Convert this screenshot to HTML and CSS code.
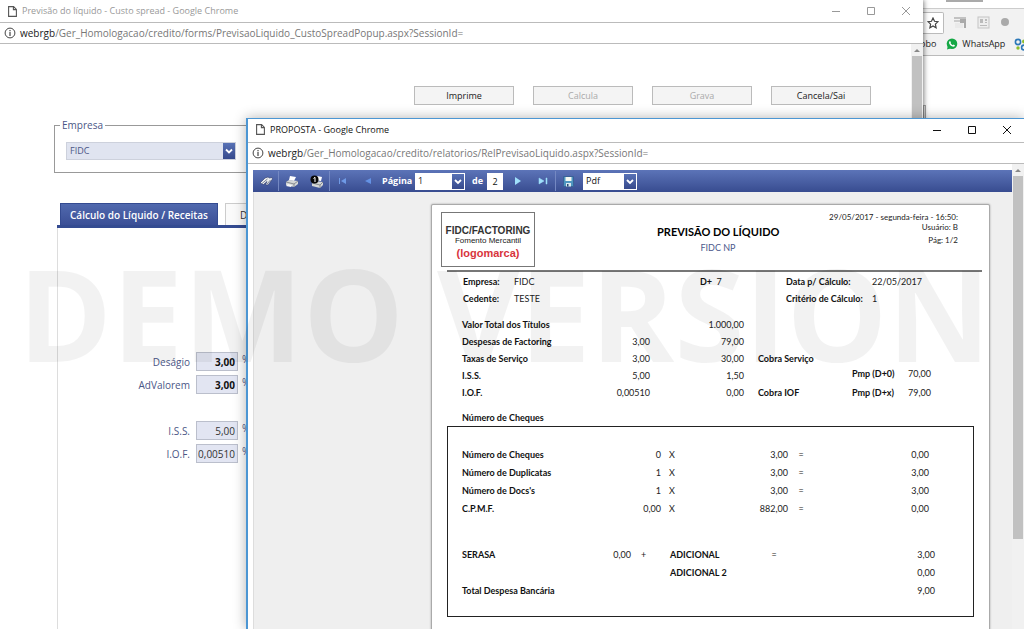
FILE: index.html
```html
<!DOCTYPE html>
<html lang="pt-BR">
<head>
<meta charset="utf-8">
<title>PROPOSTA</title>
<link rel="stylesheet" href="styles.css">
</head>
<body>
<div class="desktop">

  <div class="browser">
    <div class="browser-tabs"><span class="browser-handle"></span></div>
    <div class="browser-bar">
      <span class="omnibox-end"><svg width="12" height="12" viewBox="0 0 12 12"><path d="M6 1l1.500 3.300 3.500.4-2.600 2.400.7 3.600L6 8.900l-3.100 1.800.7-3.600L1 4.700l3.500-.4z" fill="none" stroke="#444" stroke-width="1.200"/></svg></span>
      <svg width="13" height="13" viewBox="0 0 13 13"><path d="M0 1h12v2H0z" fill="#c2c2c2"/><path d="M0 4h6v2H0z" fill="#ccc"/><path d="M6 3h6v9h-2V7H6z" fill="#aaa"/><path d="M1 7h8v5H1z" fill="#eaeaea"/></svg>
      <svg width="13" height="13" viewBox="0 0 13 13"><rect x="1" y="1" width="11" height="11" fill="#eee" stroke="#c4c4c4"/><path d="M3 3h3v4H3zM8 3h2v2H8zM3 9h7v1H3zM8 6h2v1H8z" fill="#bbb"/></svg>
      <svg width="10" height="10" viewBox="0 0 10 10"><circle cx="5" cy="5" r="4" fill="#aaa"/></svg>
    </div>
    <div class="browser-marks">
      <span>obo</span>
      <svg class="wa" width="12" height="12" viewBox="0 0 12 12"><circle cx="6" cy="5.800" r="5.300" fill="#15a845"/><path d="M1 11.500l.8-3.500 2.500 2.500z" fill="#15a845"/><path d="M4 3l1 1.300-.5.8c.5 1 1.200 1.700 2.200 2.100l.8-.7L9 7.500c-.4 1.300-1.900 1.500-3.100.8C4.400 7.600 3.300 6.100 3.100 5 3 4 3.300 3.300 4 3z" fill="#fff"/></svg>
      <span class="wa-text">WhatsApp</span>
      <svg class="apps" width="13" height="13" viewBox="0 0 13 13" fill="none" stroke-width="1.600"><circle cx="4" cy="4" r="2.600" stroke="#2c78b8"/><circle cx="10" cy="3.500" r="2" fill="#8cbd2c"/><circle cx="4" cy="10" r="1.700" fill="#8cbd2c"/><circle cx="10" cy="9.500" r="2.400" stroke="#2c78b8"/></svg>
    </div>
    <div class="browser-page"><div class="browser-edge"></div></div>
  </div>

  <section class="win win-back">
    <header class="titlebar">
      <svg width="9" height="11" viewBox="0 0 9 11"><path d="M.6.6h5l2.800 2.800v7H.6zM5.400.6v3h3" fill="none" stroke="currentColor" stroke-width="1.100"/></svg>
      <h1>Previsão do líquido - Custo spread - Google Chrome</h1>
      <div class="controls">
        <button aria-label="Minimizar"><svg width="10" height="10" viewBox="0 0 10 10"><path d="M1 5.500h8" stroke="currentColor"/></svg></button>
        <button aria-label="Maximizar"><svg width="10" height="10" viewBox="0 0 10 10"><path d="M1.500 1.500h7v7h-7z" fill="none" stroke="currentColor"/></svg></button>
        <button aria-label="Fechar"><svg width="10" height="10" viewBox="0 0 10 10"><path d="M1 1l8 8M9 1L1 9" stroke="currentColor"/></svg></button>
      </div>
    </header>
    <div class="address">
      <svg width="12" height="12" viewBox="0 0 12 12"><circle cx="6" cy="6" r="4.900" fill="none" stroke="#444"/><path d="M6 5v4M6 3v1.200" stroke="#444" stroke-width="1.200"/></svg>
      <p><b>webrgb</b>/Ger_Homologacao/credito/forms/PrevisaoLiquido_CustoSpreadPopup.aspx?SessionId=</p>
    </div>
    <div class="viewport">
      <form class="form">
        <div class="actions">
          <button type="button">Imprime</button>
          <button type="button" disabled>Calcula</button>
          <button type="button" disabled>Grava</button>
          <button type="button">Cancela/Sai</button>
        </div>
        <fieldset class="company">
          <legend>Empresa</legend>
          <span class="combo combo-company">
            <select aria-label="Empresa"><option>FIDC</option></select>
            <svg class="arrow" viewBox="0 0 12 15"><path d="M3 6l3 3 3-3" fill="none" stroke="#fff" stroke-width="1.800"/></svg>
          </span>
        </fieldset>
        <nav class="tabs">
          <button type="button" class="tab tab-on">Cálculo do Líquido / Receitas</button>
          <button type="button" class="tab">D</button>
        </nav>
        <div class="panel">
          <div class="field strong"><label for="f1">Deságio</label><input id="f1" value="3,00"><span>%</span></div>
          <div class="field strong"><label for="f2">AdValorem</label><input id="f2" value="3,00"><span>%</span></div>
          <div class="field apart"><label for="f3">I.S.S.</label><input id="f3" value="5,00"><span>%</span></div>
          <div class="field"><label for="f4">I.O.F.</label><input id="f4" value="0,00510"><span>%</span></div>
        </div>
      </form>
      <div class="scroll"><svg width="12" height="12" viewBox="0 0 12 12"><path d="M3 8l3-3 3 3z" fill="#888"/></svg><div class="thumb"></div></div>
    </div>
  </section>

  <section class="win win-front">
    <header class="titlebar">
      <svg width="9" height="11" viewBox="0 0 9 11"><path d="M.6.6h5l2.800 2.800v7H.6zM5.400.6v3h3" fill="none" stroke="#555" stroke-width="1.100"/></svg>
      <h2>PROPOSTA - Google Chrome</h2>
      <div class="controls">
        <button aria-label="Minimizar"><svg width="10" height="10" viewBox="0 0 10 10"><path d="M1 5.500h8" stroke="currentColor"/></svg></button>
        <button aria-label="Maximizar"><svg width="10" height="10" viewBox="0 0 10 10"><path d="M1.500 1.500h7v7h-7z" fill="none" stroke="currentColor"/></svg></button>
        <button aria-label="Fechar"><svg width="10" height="10" viewBox="0 0 10 10"><path d="M1 1l8 8M9 1L1 9" stroke="currentColor"/></svg></button>
      </div>
    </header>
    <div class="address">
      <svg width="12" height="12" viewBox="0 0 12 12"><circle cx="6" cy="6" r="4.900" fill="none" stroke="#444"/><path d="M6 5v4M6 3v1.200" stroke="#444" stroke-width="1.200"/></svg>
      <p><span>webrgb</span>/Ger_Homologacao/credito/relatorios/RelPrevisaoLiquido.aspx?SessionId=</p>
    </div>
    <div class="viewport">
      <div class="viewer">
        <div class="toolbar">
          <button aria-label="Localizar"><svg width="14" height="12" viewBox="0 0 14 12"><path d="M1 8l5-5 3-1 1.500 1L13 2.500l.5 1.500-4.500 6-2.500-.3L8 6.500 4.500 9.500z" fill="#eceeee" stroke="#28366a" stroke-width=".6"/><path d="M3 8.500l5.500-4.500M8 9l3.500-4" stroke="#7c8498"/></svg></button>
          <i class="sep"></i>
          <button aria-label="Imprimir"><svg width="14" height="12" viewBox="0 0 14 12"><path d="M5 1l6 1-2 4-5-1z" fill="#fff"/><path d="M1 7l3-2 9 1v3l-4 3-8-2z" fill="#d3d6d6"/><path d="M1 7l8 2 4-3M9 9v3" stroke="#737980" fill="none" stroke-width=".8"/><path d="M3 9l4 1-1 2-5-1z" fill="#f8f8f8"/></svg></button>
          <button aria-label="Imprimir página"><svg width="14" height="13" viewBox="0 0 14 13"><path d="M7 1l5 1-1 4-6-1z" fill="#fff"/><path d="M2 8l3-2 8 1v3l-3 3-8-2z" fill="#d3d6d6"/><path d="M2 8l8 2 3-3M10 10v3" stroke="#737980" fill="none" stroke-width=".8"/><circle cx="4.500" cy="4.500" r="4" fill="#080808"/><path d="M3.500 3.500L5 2.300V7" stroke="#fff" fill="none"/></svg></button>
          <i class="sep"></i>
          <button aria-label="Primeira página"><svg width="10" height="8" viewBox="0 0 10 8"><path d="M1 1h1v6H1zM8 1v6L3 4z" fill="#6f9ae6"/></svg></button>
          <button aria-label="Página anterior"><svg width="10" height="8" viewBox="0 0 10 8"><path d="M8 1v6L2 4z" fill="#6492e4"/></svg></button>
          <label class="page-label" for="page">Página</label>
          <span class="combo combo-page"><select id="page"><option>1</option></select><svg class="arrow" viewBox="0 0 12 15"><path d="M3 6l3 3 3-3" fill="none" stroke="#fff" stroke-width="1.800"/></svg></span>
          <label class="of-label" for="total">de</label>
          <input id="total" class="total" value="2">
          <button aria-label="Próxima página" class="next"><svg width="10" height="10" viewBox="0 0 10 10"><path d="M2 1v8l6-4z" fill="#9fe0fb"/></svg></button>
          <button aria-label="Última página"><svg width="10" height="10" viewBox="0 0 10 10"><path d="M1 2v6l5-3zM8 2h1v6H8z" fill="#9fe0fb" stroke="#9fe0fb" stroke-width=".5"/></svg></button>
          <i class="sep"></i>
          <button aria-label="Salvar"><svg width="11" height="11" viewBox="0 0 11 11"><path d="M.5.5h10v10h-9l-1-1z" fill="#4f96c0" stroke="#3a6296"/><path d="M2.500 1h6v4h-6z" fill="#f4f8f0"/><path d="M3 7h5v3.500H3z" fill="#dce8f0"/><path d="M4 8h1.500v2.500H4z" fill="#284a72"/></svg></button>
          <span class="combo combo-format"><select aria-label="Formato"><option>Pdf</option></select><svg class="arrow" viewBox="0 0 12 15"><path d="M3 6l3 3 3-3" fill="none" stroke="#fff" stroke-width="1.800"/></svg></span>
        </div>
        <div class="canvas">
          <article class="sheet">
            <header class="sheet-head">
              <div class="logo"><b>FIDC/FACTORING</b><span>Fomento Mercantil</span><strong>(logomarca)</strong></div>
              <div class="sheet-title"><h3>PREVISÃO DO LÍQUIDO</h3><p>FIDC NP</p></div>
              <div class="stamp"><p>29/05/2017 - segunda-feira - 16:50:</p><p>Usuário: B</p><p class="pg">Pág: 1/2</p></div>
            </header>
            <div class="info">
              <b>Empresa:</b><span>FIDC</span><b>D+&nbsp; <span>7</span></b><b>Data p/ Cálculo:</b><span>22/05/2017</span>
              <b>Cedente:</b><span>TESTE</span><b></b><b>Critério de Cálculo:</b><span>1</span>
            </div>
            <table class="sums">
              <colgroup><col class="a"><col class="b"><col class="c"><col class="d"><col class="e"><col></colgroup>
              <tr><th>Valor Total dos Títulos</th><td></td><td>1.000,00</td><th></th><th></th><td></td></tr>
              <tr><th>Despesas de Factoring</th><td>3,00</td><td>79,00</td><th></th><th></th><td></td></tr>
              <tr><th>Taxas de Serviço</th><td>3,00</td><td>30,00</td><th>Cobra Serviço</th><th></th><td></td></tr>
              <tr class="raised"><th>I.S.S.</th><td>5,00</td><td>1,50</td><th></th><th>Pmp (D+0)</th><td>70,00</td></tr>
              <tr><th>I.O.F.</th><td>0,00510</td><td>0,00</td><th>Cobra IOF</th><th>Pmp (D+x)</th><td>79,00</td></tr>
            </table>
            <h4 class="caption">Número de Cheques</h4>
            <div class="box">
              <table class="counts">
                <colgroup><col class="a"><col class="b"><col class="c"><col class="d"><col></colgroup>
                <tr><th>Número de Cheques</th><td>0</td><td class="op">X</td><td>3,00</td><td class="op">=</td><td>0,00</td></tr>
                <tr><th>Número de Duplicatas</th><td>1</td><td class="op">X</td><td>3,00</td><td class="op">=</td><td>3,00</td></tr>
                <tr><th>Número de Docs's</th><td>1</td><td class="op">X</td><td>3,00</td><td class="op">=</td><td>3,00</td></tr>
                <tr><th>C.P.M.F.</th><td>0,00</td><td class="op">X</td><td>882,00</td><td class="op">=</td><td>0,00</td></tr>
              </table>
              <table class="extra">
                <colgroup><col class="a"><col class="b"><col class="c"><col class="d"><col></colgroup>
                <tr><th>SERASA</th><td>0,00</td><td class="op">+</td><th>ADICIONAL</th><td class="op">=</td><td>3,00</td></tr>
                <tr><th></th><td></td><td></td><th>ADICIONAL 2</th><td></td><td>0,00</td></tr>
                <tr><th>Total Despesa Bancária</th><td></td><td></td><th></th><td></td><td>9,00</td></tr>
              </table>
            </div>
          </article>
        </div>
      </div>
      <div class="scroll"><svg width="12" height="12" viewBox="0 0 12 12"><path d="M3 8l3-3 3 3z" fill="#888"/></svg><div class="thumb"></div></div>
    </div>
  </section>

  <div class="watermark">DEMO VERSION</div>
</div>
</body>
</html>
```

FILE: styles.css
```css
* { box-sizing: border-box; }
body { margin: 0; background: #fff; color: #222; font: 10px/14px "Open Sans", sans-serif; }
h1, h2, h3, h4, p { margin: 0; font-size: inherit; font-weight: inherit; }
button, input, select { font: inherit; color: inherit; margin: 0; padding: 0; border: 0; border-radius: 0; background: none; }
svg { display: block; flex: none; }
.desktop { position: relative; min-height: 100vh; overflow: hidden; }

/* browser behind the popups */
.browser { position: absolute; inset: 0 0 0 923px; display: flex; flex-direction: column; background: #fff; }
.browser-tabs { height: 9px; border-bottom: 1px solid #ccc; padding-left: 23px; }
.browser-handle { display: block; width: 37px; height: 2px; background: #aaa; }
.browser-bar { display: flex; align-items: center; gap: 10px; height: 26px; background: #f2f2f2; }
.omnibox-end { display: grid; place-items: center end; width: 21px; height: 22px; margin-top: 2px; padding-right: 4px; background: #fff; border: 1px solid #bbb; border-left: 0; border-radius: 0 2px 2px 0; }
.browser-marks { display: flex; align-items: center; height: 21px; padding-bottom: 2px; background: #f2f2f2; border-bottom: 1px solid #bbb; font-size: 9px; white-space: nowrap; }
.browser-marks > span:first-child { margin-left: -3px; }
.wa { margin-left: 10px; }
.wa-text { margin-left: 4px; }
.apps { margin-left: 9px; }
.browser-edge { width: 3px; height: 20px; margin-top: 49px; border: 1px solid #aaa; background: #eee; }

/* popup windows */
.win { position: absolute; display: flex; flex-direction: column; background: #fff; }
.win-back { inset: 0 101px 0 0; box-shadow: 1px 0 5px rgba(0,0,0,.5); }
.win-front { inset: 118px 0 0 246px; border: 1px solid #4c96d3; border-width: 1px 0 0 2px; box-shadow: 0 0 12px rgba(0,0,0,.3); }
.titlebar { display: flex; align-items: center; height: 23px; padding-left: 8px; border-bottom: 1px solid #bbb; font-size: 9px; color: #111; }
.win-back .titlebar { color: #999; }
.win-back .titlebar > svg { color: #555; }
.titlebar h1, .titlebar h2 { margin-left: 5px; flex: 1; white-space: nowrap; }
.win-front .titlebar { height: 24px; padding-bottom: 2px; }
.controls { display: flex; gap: 25px; padding-right: 12px; }
.address { display: flex; align-items: center; gap: 4px; height: 21px; padding-left: 4px; border-bottom: 1px solid #bbb; font-size: 10px; color: #777; white-space: nowrap; }
.address b, .address span { color: #222; font-weight: 400; }
.viewport { display: flex; flex: 1; min-height: 0; }
.scroll { width: 12px; background: #f1f1f1; flex: none; }
.thumb { width: 10px; margin: 0 auto; background: #c1c1c1; height: 78%; }

/* drop-downs */
.combo { position: relative; display: block; }
.combo select { appearance: none; width: 100%; height: 100%; padding-left: 3px; }
.arrow { position: absolute; top: 1px; right: 1px; width: 12px; height: calc(100% - 2px); background: linear-gradient(#5872b6, #36498c); pointer-events: none; }

/* form */
.form { flex: 1; min-width: 0; display: flex; flex-direction: column; padding-top: 42px; color: #4b5686; }
.actions { display: flex; gap: 19px; justify-content: flex-end; padding-right: 40px; font-size: 9px; }
.actions button { width: 100px; height: 19px; border: 1px solid #bbb; background: #f4f4f4; color: #222; }
.actions button:disabled { color: #aaa; }
.company { margin: 13px 340px 0 54px; padding: 10px 11px 12px; border: 1px solid #999; min-width: 0; }
.company legend { margin-left: -6px; padding: 0 2px; font-size: 10px; line-height: 14px; }
.combo-company { width: 170px; height: 18px; background: #e0e4f0; border: 1px solid #cdd1dc; font-size: 9px; }
.combo-company .arrow { top: 0; height: 100%; right: 0; }
.tabs { display: flex; gap: 7px; margin: 30px 20px 0 57px; padding-left: 3px; border-bottom: 3px solid #344b91; font-size: 10px; }
.tab { height: 22px; padding: 0 14px; border: 1px solid #ccc; border-bottom: 0; background: #fafafa; color: #333; }
.tab-on { width: 158px; padding: 0; border-color: #344b91; background: linear-gradient(#5069ae, #3b4f96); color: #fff; font-weight: 600; font-size: 10px; }
.panel { flex: 1; margin: 0 20px 0 57px; border-left: 1px solid #ddd; padding-top: 124px; display: flex; flex-direction: column; gap: 4px; }
.field { display: flex; align-items: center; font-size: 10px; line-height: 14px; }
.field label { width: 132px; text-align: right; margin-right: 6px; }
.field input { width: 42px; height: 19px; padding-right: 2px; border: 1px solid #bbbfcc; background: #e2e5f2; text-align: right; font: 10px "Open Sans", sans-serif; color: #333; }
.field.strong input { font-weight: 700; color: #111; }
.field.apart { margin-top: 23px; }
.field span { margin-left: 4px; align-self: flex-start; }

/* report viewer */
.viewer { flex: 1; min-width: 0; display: flex; flex-direction: column; padding: 6px 0 0 5px; }
.toolbar { display: flex; align-items: center; height: 22px; flex: none; background: linear-gradient(#5c74b8, #384c90); color: #fff; font-size: 9px; }
.toolbar button { display: grid; place-items: center; width: 25px; height: 22px; }
.sep { width: 1px; height: 20px; background: #7488c2; }
.page-label { width: 33px; margin-left: 2px; font-weight: 700; }
.of-label { font-weight: 700; margin: 0 4px 0 7px; }
.toolbar .combo, .total { height: 17px; background: #fff; color: #111; font-size: 9px; }
.combo-page { width: 50px; }
.total { width: 16px; text-align: center; }
.toolbar .next { margin-left: 2px; }
.combo-format { width: 54px; margin-left: 2px; }
.canvas { flex: 1; min-height: 0; display: flex; background: #efefef; border-left: 1px solid #ddd; padding: 12px 22px 0 177px; overflow: hidden; }
.sheet { flex: 1; align-self: flex-start; min-height: 440px; padding: 7px 7px 0 9px; background: #fff; border: 1px solid #aaa; border-radius: 2px 2px 0 0; box-shadow: 0 0 2px #999; font: 9px/12px "Lato", sans-serif; color: #222; }
.sheet b, .sheet th, .caption { font-weight: 700; color: #111; }
.sheet-head { display: grid; grid-template-columns: 94px 1fr auto; padding-bottom: 3px; }
.logo { display: flex; flex-direction: column; align-items: center; justify-content: center; height: 55px; border: 1px solid #777; font: 8px/10px "Liberation Sans", sans-serif; padding-top: 6px; }
.sheet .logo b { font-size: 10px; line-height: 11px; color: #333; }
.logo strong { font-size: 11px; line-height: 15px; color: #d8343c; }
.sheet-title { margin: 13px 0 0 122px; }
.sheet-title h3 { width: 122px; font-size: 11px; line-height: 14px; font-weight: 700; color: #000; white-space: nowrap; text-align: center; }
.sheet-title p { width: 122px; margin-top: 3px; text-align: center; color: #4d598c; }
.stamp { padding-right: 24px; font-size: 8px; line-height: 10px; text-align: right; white-space: nowrap; }
.stamp .pg { margin-top: 3px; }
.info { display: grid; grid-template-columns: 51px 186px 86px 86px 1fr; row-gap: 4px; margin-left: 6px; padding: 3px 0 0 16px; border-top: 2px solid #777; line-height: 13px; white-space: nowrap; }
.info b span { font-weight: 400; }
.sheet table { border-collapse: collapse; table-layout: fixed; width: 100%; }
.sheet th, .sheet td { height: 17px; padding: 0; white-space: nowrap; }
.sheet th { text-align: left; }
.sheet td { text-align: right; }
.sheet .sums { width: calc(100% - 21px); margin: 11px 0 0 21px; }
.sums .a { width: 128px; }
.sums .b { width: 60px; }
.sums .c { width: 94px; }
.sums .d { width: 108px; }
.sums .e { width: 48px; }
.sums th:nth-child(4) { padding-left: 14px; }
.sheet .sums td:last-child { padding-right: 51px; }
.sums .raised > :nth-child(n+5) { padding-bottom: 4px; }
.caption { margin: 11px 0 0 21px; }
.box { margin: 2px 8px 0 6px; padding: 19px 38px 16px 14px; border: 1px solid #222; }
.sheet .box th, .sheet .box td { height: 18px; }
.sheet .box .op { text-align: center; }
.counts .a { width: 128px; }
.counts .b { width: 71px; }
.counts .c { width: 22px; }
.counts .d { width: 105px; }
.sheet .counts td:last-child { padding-right: 6px; }
.counts col:last-child { width: 26px; }
.extra { margin-top: 28px; }
.extra .a { width: 128px; }
.extra .b { width: 41px; }
.extra .c { width: 25px; }
.extra .d { width: 105px; }
.extra col:last-child { width: 26px; }
.sheet .extra th:nth-child(4) { padding-left: 14px; }

.watermark { position: absolute; left: 18px; top: 229px; font: 700 127px/168px "Open Sans", sans-serif; color: rgba(0,0,0,.05); white-space: nowrap; pointer-events: none; }
```
